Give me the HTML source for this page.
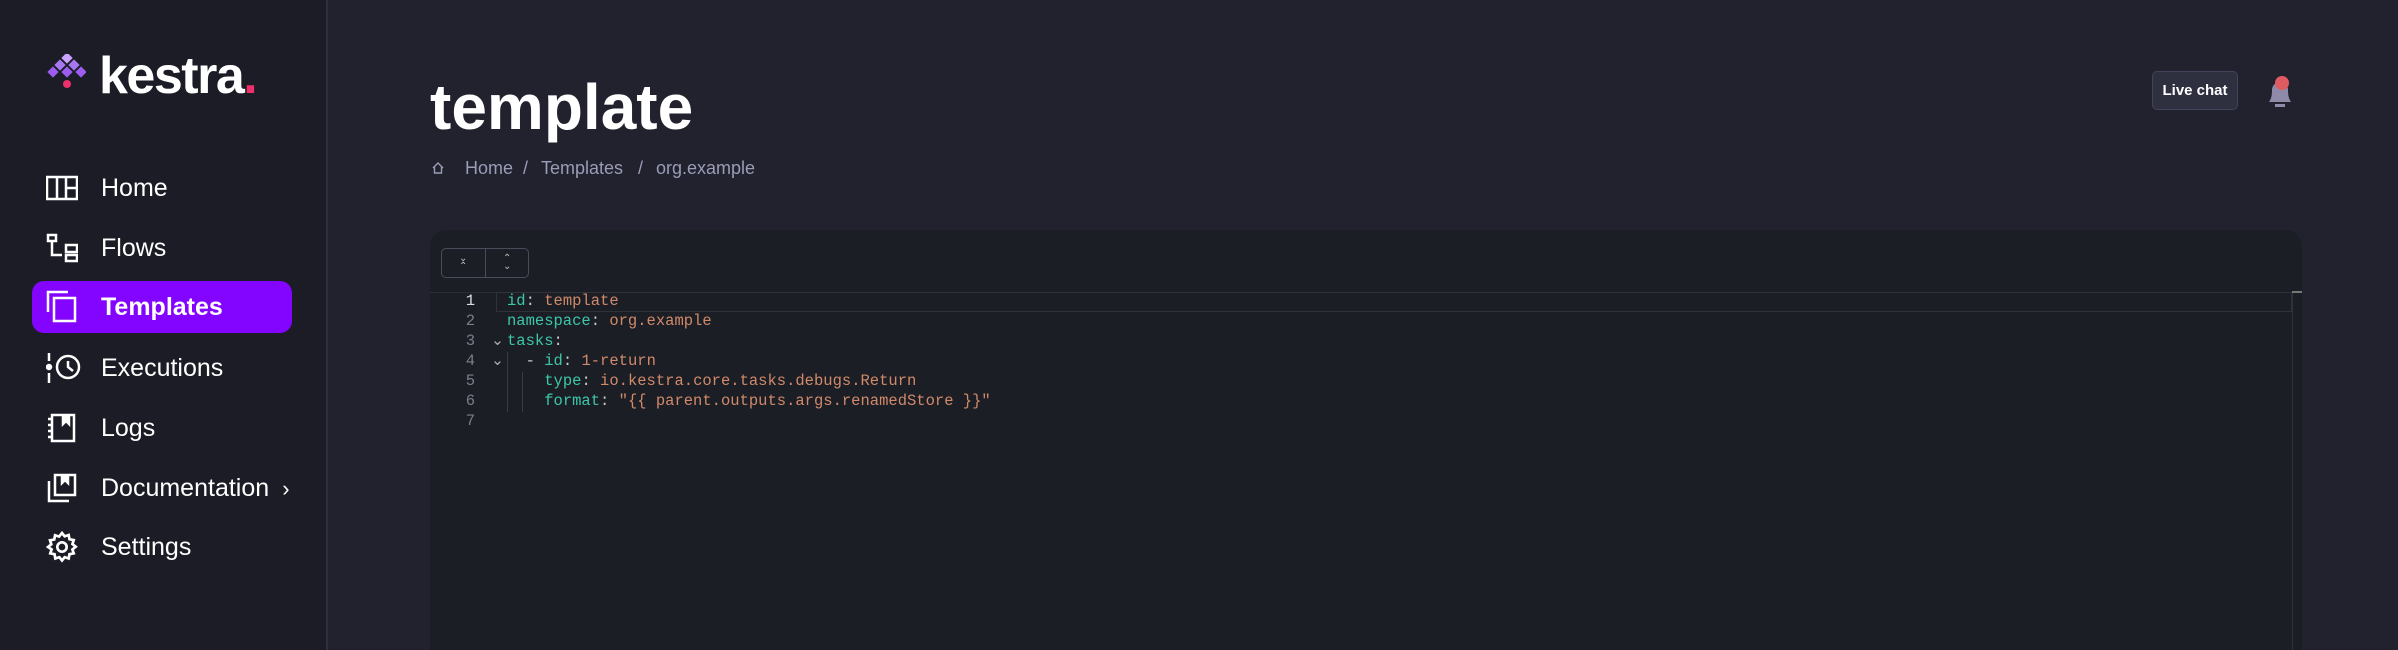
<!DOCTYPE html>
<html><head><meta charset="utf-8"><style>
*{margin:0;padding:0;box-sizing:border-box}
html,body{width:2398px;height:650px;overflow:hidden}
body{background:#21222d;font-family:"Liberation Sans",sans-serif;position:relative;color:#fff}
.side{position:absolute;left:0;top:0;width:328px;height:650px;background:#1b1c25;border-right:2px solid #2d2f3d}
.logo{position:absolute;left:99px;top:46px;font-size:52px;font-weight:bold;letter-spacing:-1.5px}
.nav{position:absolute;left:32px;width:260px;height:52px;border-radius:12px;display:flex;align-items:center}
.nav span{position:absolute;left:69px;font-size:25px}
.nav svg{position:absolute;left:14px}
.act{background:#8405ff}
.act span{font-weight:bold}
h1{position:absolute;left:430px;top:70px;font-size:64px;font-weight:bold}
.bc{position:absolute;top:158px;font-size:18px;color:#9a9cb8}
.ed{position:absolute;left:430px;top:230px;width:1872px;height:420px;background:#1c1e26;border-radius:16px 16px 0 0}
.btns{position:absolute;left:441px;top:248px;width:88px;height:30px;border:1px solid #4a4c5c;border-radius:5px}
.btns:after{content:"";position:absolute;left:43px;top:0;width:1px;height:28px;background:#4a4c5c}
.code{position:absolute;left:0;top:291px;font-family:"Liberation Mono",monospace;font-size:15.5px;line-height:20px}
.ln{position:absolute;left:455px;width:20px;text-align:right;color:#7b7d8c}
.cl{position:absolute;left:507px;white-space:pre;color:#d08a6a}
.k{color:#3cc7a8}.w{color:#ccc}
.lc{position:absolute;left:2152px;top:71px;width:86px;height:39px;background:#2e3040;border:1px solid #41435a;border-radius:5px;font-size:15px;font-weight:bold;text-align:center;line-height:37px}
</style></head><body>
<div class="side">
<svg style="position:absolute;left:46px;top:54px" width="40" height="36" viewBox="0 0 40 36">
<g fill="#a678f0"><rect x="17" y="0" width="8" height="8" transform="rotate(45 21 4)" fill="#c9a3ff"/><rect x="10" y="7" width="8" height="8" transform="rotate(45 14 11)"/><rect x="24" y="7" width="8" height="8" transform="rotate(45 28 11)"/><rect x="3" y="14" width="8" height="8" transform="rotate(45 7 18)" fill="#9d5cf0"/><rect x="17" y="14" width="8" height="8" transform="rotate(45 21 18)" fill="#9d5cf0"/><rect x="31" y="14" width="8" height="8" transform="rotate(45 35 18)" fill="#9d5cf0"/></g>
<circle cx="21" cy="30" r="4" fill="#f0306a"/></svg>
<div class="logo">kestra<span style="color:#f0306a">.</span></div>
<div class="nav" style="top:162px"><svg width="32" height="26" viewBox="0 0 32 26" fill="none" stroke="#fff" stroke-width="2.5"><rect x="1" y="2" width="30" height="22"/><path d="M11 2v22M20 2v22M20 13h11"/></svg><span>Home</span></div>
<div class="nav" style="top:222px"><svg width="32" height="30" viewBox="0 0 32 30" fill="none" stroke="#fff" stroke-width="2.5"><rect x="2" y="2" width="8" height="6"/><path d="M6 8v14h10"/><rect x="20" y="12" width="11" height="7"/><rect x="20" y="22" width="11" height="6"/></svg><span>Flows</span></div>
<div class="nav act" style="top:281px"><svg width="32" height="34" viewBox="0 0 32 34" fill="none" stroke="#fff" stroke-width="2.5"><path d="M2 22V2h20"/><rect x="8" y="8" width="21" height="23"/></svg><span>Templates</span></div>
<div class="nav" style="top:342px"><svg width="36" height="30" viewBox="0 0 36 30" fill="none" stroke="#fff" stroke-width="2.5"><path d="M3 0v8M3 20v10"/><circle cx="3" cy="14" r="2" fill="#fff"/><circle cx="22" cy="14" r="11"/><path d="M22 8v6l5 4"/></svg><span>Executions</span></div>
<div class="nav" style="top:402px"><svg width="32" height="30" viewBox="0 0 32 30" fill="none" stroke="#fff" stroke-width="2.5"><rect x="6" y="2" width="22" height="26"/><path d="M2 6h4M2 12h4M2 18h4M2 24h4"/><path d="M17 2v9l3-3 3 3V2" fill="#fff"/></svg><span>Logs</span></div>
<div class="nav" style="top:462px"><svg width="32" height="30" viewBox="0 0 32 30" fill="none" stroke="#fff" stroke-width="2.5"><path d="M3 8v20h20"/><rect x="9" y="2" width="20" height="20"/><path d="M16 2v8l3-3 3 3V2" fill="#fff"/></svg><span>Documentation <span style="position:static;font-size:22px">&nbsp;›</span></span></div>
<div class="nav" style="top:521px"><svg width="32" height="32" viewBox="0 0 24 24" fill="none" stroke="#fff" stroke-width="2"><circle cx="12" cy="12" r="3.5"/><path d="M12 1.5l2 2.5 3-1 .6 3.2 3.2.6-1 3 2.5 2-2.5 2 1 3-3.2.6-.6 3.2-3-1-2 2.5-2-2.5-3 1-.6-3.2-3.2-.6 1-3L1.5 12 4 10 3 7l3.2-.6L6.8 3.2l3 1z"/></svg><span>Settings</span></div>
</div>
<h1>template</h1>
<svg style="position:absolute;left:431px;top:161px" width="14" height="14" viewBox="0 0 14 14" fill="none" stroke="#9a9cb8" stroke-width="1.4"><path d="M2 7l5-5 5 5M3.5 6v6h7V6"/></svg>
<div class="bc" style="left:465px">Home</div><div class="bc" style="left:523px">/</div><div class="bc" style="left:541px">Templates</div><div class="bc" style="left:638px">/</div><div class="bc" style="left:656px">org.example</div>
<div class="lc">Live chat</div>
<svg style="position:absolute;left:2265px;top:74px" width="30" height="34" viewBox="0 0 30 34"><path d="M4 28c2-3 3-6 3-12a8 8 0 0 1 16 0c0 6 1 9 3 12z" fill="#8e8aa8"/><rect x="10" y="30" width="10" height="3" fill="#8e8aa8"/><circle cx="17" cy="9" r="7" fill="#e05a62"/></svg>
<div class="ed"></div>
<div class="btns"><span style="position:absolute;left:17px;top:6px;font-size:10px;color:#bbb;line-height:8px">&#x2304;<br>&#x2303;</span><span style="position:absolute;left:61px;top:6px;font-size:10px;color:#bbb;line-height:8px">&#x2303;<br>&#x2304;</span></div>
<div style="position:absolute;left:430px;top:292px;width:1872px;height:1px;background:#2c2d35"></div>
<div style="position:absolute;left:496px;top:292px;width:1796px;height:20px;border:1px solid #30323a"></div>
<div style="position:absolute;left:2292px;top:292px;width:1px;height:360px;background:#30323a"></div>
<div style="position:absolute;left:2292px;top:291px;width:10px;height:2px;background:#777"></div>
<div style="position:absolute;left:507px;top:352px;width:1px;height:60px;background:#3a3c44"></div>
<div style="position:absolute;left:522px;top:372px;width:1px;height:40px;background:#3a3c44"></div>
<div class="code">
<div class="ln" style="top:0;color:#ddd">1</div><div class="ln" style="top:20px">2</div><div class="ln" style="top:40px">3</div><div class="ln" style="top:60px">4</div><div class="ln" style="top:80px">5</div><div class="ln" style="top:100px">6</div><div class="ln" style="top:120px">7</div>
<div class="ln" style="top:40px;left:484px;color:#aaa">⌄</div><div class="ln" style="top:60px;left:484px;color:#aaa">⌄</div>
<div class="cl" style="top:0"><span class="k">id</span><span class="w">:</span> template</div>
<div class="cl" style="top:20px"><span class="k">namespace</span><span class="w">:</span> org.example</div>
<div class="cl" style="top:40px"><span class="k">tasks</span><span class="w">:</span></div>
<div class="cl" style="top:60px">  <span class="w">-</span> <span class="k">id</span><span class="w">:</span> 1-return</div>
<div class="cl" style="top:80px">    <span class="k">type</span><span class="w">:</span> io.kestra.core.tasks.debugs.Return</div>
<div class="cl" style="top:100px">    <span class="k">format</span><span class="w">:</span> "{{ parent.outputs.args.renamedStore }}"</div>
</div>
</body></html>
